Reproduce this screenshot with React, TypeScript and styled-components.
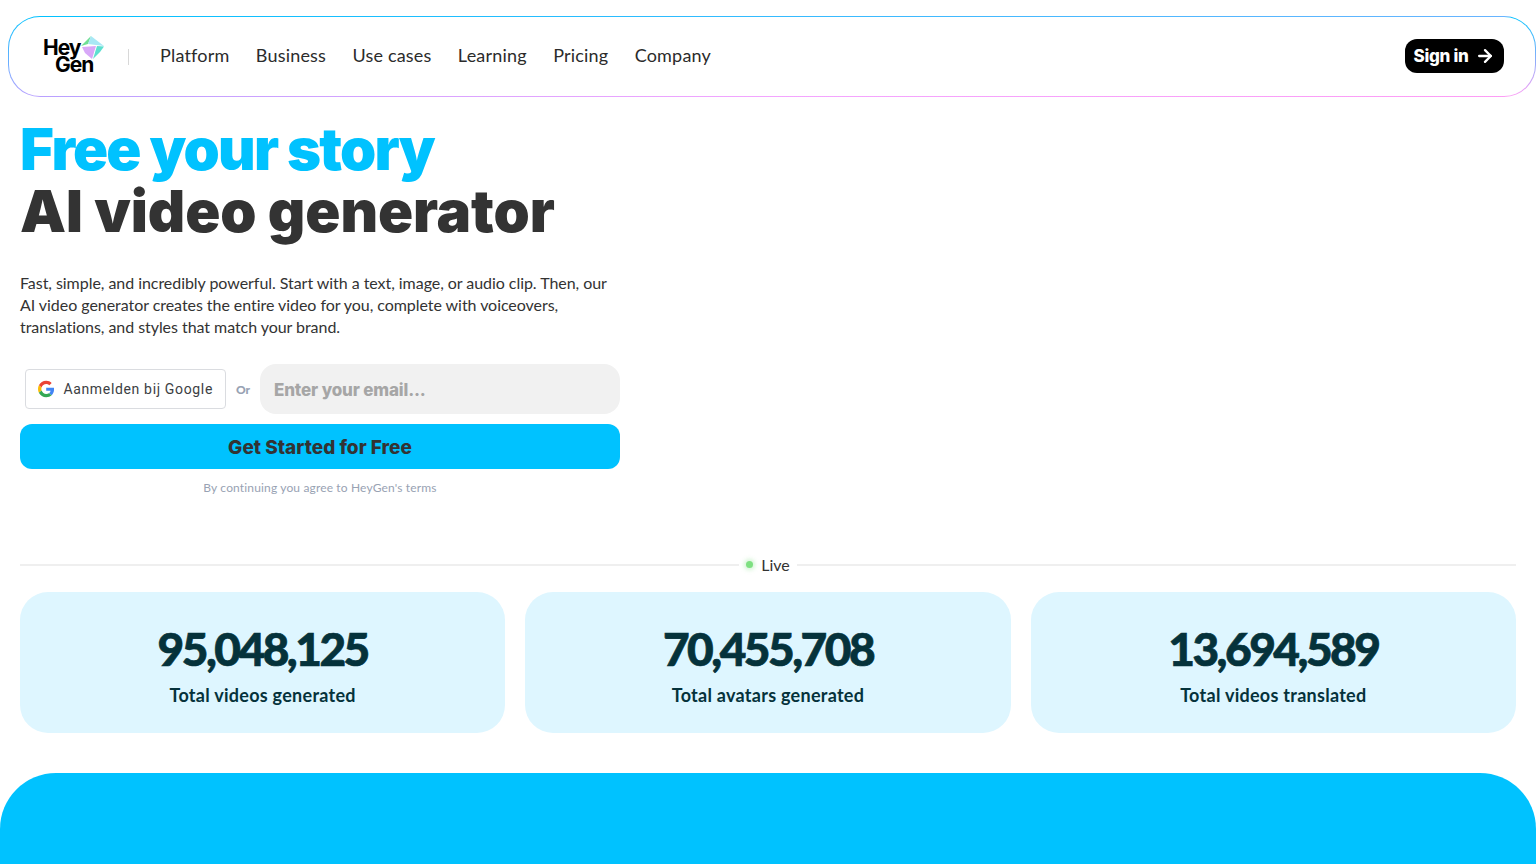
import { createGlobalStyle, styled } from "styled-components";
import { ArrowRight } from "lucide-react";

const NAV_ITEMS = ["Platform", "Business", "Use cases", "Learning", "Pricing", "Company"];

const STATS = [
  { value: "95,048,125", label: "Total videos generated" },
  { value: "70,455,708", label: "Total avatars generated" },
  { value: "13,694,589", label: "Total videos translated" },
];

const DISPLAY_FONT = `"Inter", "Lato", sans-serif`;

const GlobalStyle = createGlobalStyle`
  * { box-sizing: border-box; }
  html, body { margin: 0; padding: 0; background: #fff; overflow: hidden; }
  body { font-family: "Lato", "Liberation Sans", sans-serif; color: #333; }
`;

const Page = styled.div`
  width: 1536px;
  height: 864px;
  display: flex;
  flex-direction: column;
`;

const Nav = styled.nav`
  margin: 16px 0 0 8px;
  height: 81px;
  flex: none;
  display: flex;
  align-items: center;
  justify-content: space-between;
  padding: 0 31px 2px 33px;
  border: 1px solid transparent;
  border-radius: 32px;
  background:
    linear-gradient(#fff, #fff) padding-box,
    linear-gradient(90deg, #00c2ff, #6ab4ff) top / 100% 1px no-repeat border-box,
    linear-gradient(180deg, #00c2ff, rgba(0, 194, 255, 0)) border-box,
    linear-gradient(90deg, #b8a0ff 0%, #f5a5ff 50%, #ff9cf5 100%) border-box;
`;

const NavLeft = styled.div`
  display: flex;
  align-items: center;
`;

const LogoWrap = styled.div`
  width: 62px;
  height: 38px;
  position: relative;
  flex: none;
`;

const LogoWord = styled.span<{ $left: number; $top: number }>`
  position: absolute;
  left: ${(p) => p.$left}px;
  top: ${(p) => p.$top}px;
  font-family: "Inter", sans-serif;
  font-weight: 700;
  font-size: 21px;
  line-height: 20px;
  letter-spacing: -1px;
  color: #000;
`;

const LogoMark = styled.svg`
  position: absolute;
  left: 39px;
  top: -1px;
`;

const Divider = styled.div`
  width: 1px;
  height: 16px;
  background: #d8d8d8;
  margin: 2px 31px 0 24px;
`;

const Menu = styled.div`
  display: flex;
  gap: 26.3px;
  padding-bottom: 2px;
`;

const MenuItem = styled.a`
  font-size: 18px;
  line-height: 24px;
  letter-spacing: 0.2px;
  color: #2b2b2b;
`;

const SignIn = styled.button`
  width: 99px;
  height: 34px;
  border: 0;
  border-radius: 12px;
  background: #000;
  color: #fff;
  display: flex;
  align-items: center;
  justify-content: center;
  gap: 7px;
  font-family: ${DISPLAY_FONT};
  font-weight: 800;
  font-size: 17px;
  letter-spacing: -0.3px;
  padding: 1px 0 0;
`;

const Hero = styled.section`
  padding: 21px 0 0 20px;
  width: 640px;
`;

const Title = styled.h1`
  margin: 0;
  font-family: ${DISPLAY_FONT};
  font-size: 58px;
  line-height: 62px;
  font-weight: 900;
  letter-spacing: -0.1px;
  color: #333;
  white-space: nowrap;
`;

const TitleAccent = styled.span`
  display: block;
  color: #00c2ff;
  letter-spacing: -1.8px;
`;

const Lead = styled.p`
  margin: 30px 0 0;
  width: 600px;
  font-size: 16px;
  line-height: 22px;
  letter-spacing: -0.05px;
  color: #333;
`;

const SignupRow = styled.div`
  margin-top: 26px;
  width: 600px;
  display: flex;
  align-items: center;
  padding-left: 5px;
`;

const GoogleButton = styled.button`
  width: 201px;
  height: 40px;
  flex: none;
  display: flex;
  align-items: center;
  gap: 9px;
  padding: 0 12px;
  background: #fff;
  border: 1px solid #dadce0;
  border-radius: 4px;
  font-family: "Roboto", sans-serif;
  font-size: 14px;
  letter-spacing: 0.66px;
  color: #3c4043;
  white-space: nowrap;
`;

const OrLabel = styled.span`
  width: 34px;
  flex: none;
  text-align: center;
  font-size: 12px;
  font-weight: 900;
  color: #98a2b3;
`;

const EmailInput = styled.input`
  flex: 1;
  min-width: 0;
  height: 50px;
  border: 0;
  border-radius: 16px;
  background: #f1f1f1;
  padding: 2px 14px 0;
  font-family: ${DISPLAY_FONT};
  font-weight: 800;
  font-size: 17px;
  letter-spacing: -0.15px;
  &::placeholder { color: #a6a6a6; opacity: 1; }
`;

const StartButton = styled.button`
  display: block;
  margin-top: 10px;
  width: 600px;
  height: 45px;
  border: 0;
  border-radius: 12px;
  background: #00c2ff;
  color: #333;
  padding: 2px 0 0;
  font-family: ${DISPLAY_FONT};
  font-weight: 800;
  font-size: 19px;
  letter-spacing: 0;
`;

const Terms = styled.p`
  margin: 11px 0 0;
  width: 600px;
  text-align: center;
  font-size: 12px;
  line-height: 15px;
  letter-spacing: 0.15px;
  color: #98a2b3;
`;

const LiveRow = styled.div`
  margin: 59px 20px 0;
  display: flex;
  align-items: center;
  gap: 7px;
  height: 22px;
  flex: none;
`;

const LiveLine = styled.div`
  flex: 1;
  height: 2px;
  background: #efefef;
`;

const LiveTag = styled.div`
  display: flex;
  align-items: center;
  gap: 8px;
  font-size: 16px;
  color: #333;
  padding-bottom: 2px;
`;

const LiveDot = styled.span`
  width: 7px;
  height: 7px;
  border-radius: 50%;
  background: #7ee081;
  box-shadow: 0 0 4px 2px rgba(126, 224, 129, 0.35);
`;

const StatGrid = styled.div`
  margin: 16px 20px 0;
  display: grid;
  grid-template-columns: repeat(3, 1fr);
  gap: 20px;
  flex: none;
`;

const StatCard = styled.div`
  height: 141px;
  border-radius: 28px;
  background: #def6ff;
  color: #05323b;
  display: flex;
  flex-direction: column;
  align-items: center;
  padding-top: 30px;
`;

const StatValue = styled.div`
  font-size: 46px;
  line-height: 54px;
  font-weight: 900;
  letter-spacing: -2.5px;
  -webkit-text-stroke: 0.7px #05323b;
`;

const StatLabel = styled.div`
  margin-top: 7px;
  font-size: 18px;
  line-height: 24px;
  font-weight: 700;
  letter-spacing: 0.27px;
`;

const BlueBand = styled.div`
  margin-top: 40px;
  flex: 1;
  background: #00c2ff;
  border-radius: 56px 56px 0 0;
`;

const HeyGenLogo = () => (
  <LogoWrap>
    <LogoWord $left={1} $top={1}>Hey</LogoWord>
    <LogoWord $left={13} $top={18}>Gen</LogoWord>
    <LogoMark width="23" height="23" viewBox="0 0 23 23">
      <polygon points="10,0 0,10 7,8" fill="#6fdf94" />
      <polygon points="10,0 23,10 7,8" fill="#a8e8f5" />
      <polygon points="1,11 15,10 11,23 4,17" fill="#d8a8f8" />
      <polygon points="16,10 23,10.5 19,16 12,23" fill="#5ee0d0" />
    </LogoMark>
  </LogoWrap>
);

const GoogleIcon = () => (
  <svg width="18" height="18" viewBox="0 0 48 48">
    <path fill="#EA4335" d="M24 9.5c3.54 0 6.71 1.22 9.21 3.6l6.85-6.85C35.9 2.38 30.47 0 24 0 14.62 0 6.51 5.38 2.56 13.22l7.98 6.19C12.43 13.72 17.74 9.5 24 9.5z" />
    <path fill="#4285F4" d="M46.98 24.55c0-1.57-.15-3.09-.38-4.55H24v9.02h12.94c-.58 2.96-2.26 5.48-4.78 7.18l7.73 6c4.51-4.18 7.09-10.36 7.09-17.65z" />
    <path fill="#FBBC05" d="M10.53 28.59c-.48-1.45-.76-2.99-.76-4.59s.27-3.14.76-4.59l-7.98-6.19C.92 16.46 0 20.12 0 24c0 3.88.92 7.54 2.56 10.78l7.97-6.19z" />
    <path fill="#34A853" d="M24 48c6.48 0 11.93-2.13 15.89-5.81l-7.73-6c-2.15 1.45-4.92 2.3-8.16 2.3-6.26 0-11.57-4.22-13.47-9.91l-7.98 6.19C6.51 42.62 14.62 48 24 48z" />
  </svg>
);

export default function App() {
  return (
    <Page>
      <GlobalStyle />
      <Nav>
        <NavLeft>
          <HeyGenLogo />
          <Divider />
          <Menu>
            {NAV_ITEMS.map((item) => (
              <MenuItem key={item}>{item}</MenuItem>
            ))}
          </Menu>
        </NavLeft>
        <SignIn>
          Sign in
          <ArrowRight size={20} strokeWidth={2.8} />
        </SignIn>
      </Nav>

      <Hero>
        <Title>
          <TitleAccent>Free your story</TitleAccent>
          AI video generator
        </Title>
        <Lead>
          Fast, simple, and incredibly powerful. Start with a text, image, or audio clip. Then, our
          AI video generator creates the entire video for you, complete with voiceovers,
          translations, and styles that match your brand.
        </Lead>
        <SignupRow>
          <GoogleButton>
            <GoogleIcon />
            Aanmelden bij Google
          </GoogleButton>
          <OrLabel>Or</OrLabel>
          <EmailInput placeholder="Enter your email..." />
        </SignupRow>
        <StartButton>Get Started for Free</StartButton>
        <Terms>By continuing you agree to HeyGen's terms</Terms>
      </Hero>

      <LiveRow>
        <LiveLine />
        <LiveTag>
          <LiveDot />
          Live
        </LiveTag>
        <LiveLine />
      </LiveRow>

      <StatGrid>
        {STATS.map((stat) => (
          <StatCard key={stat.label}>
            <StatValue>{stat.value}</StatValue>
            <StatLabel>{stat.label}</StatLabel>
          </StatCard>
        ))}
      </StatGrid>

      <BlueBand />
    </Page>
  );
}
